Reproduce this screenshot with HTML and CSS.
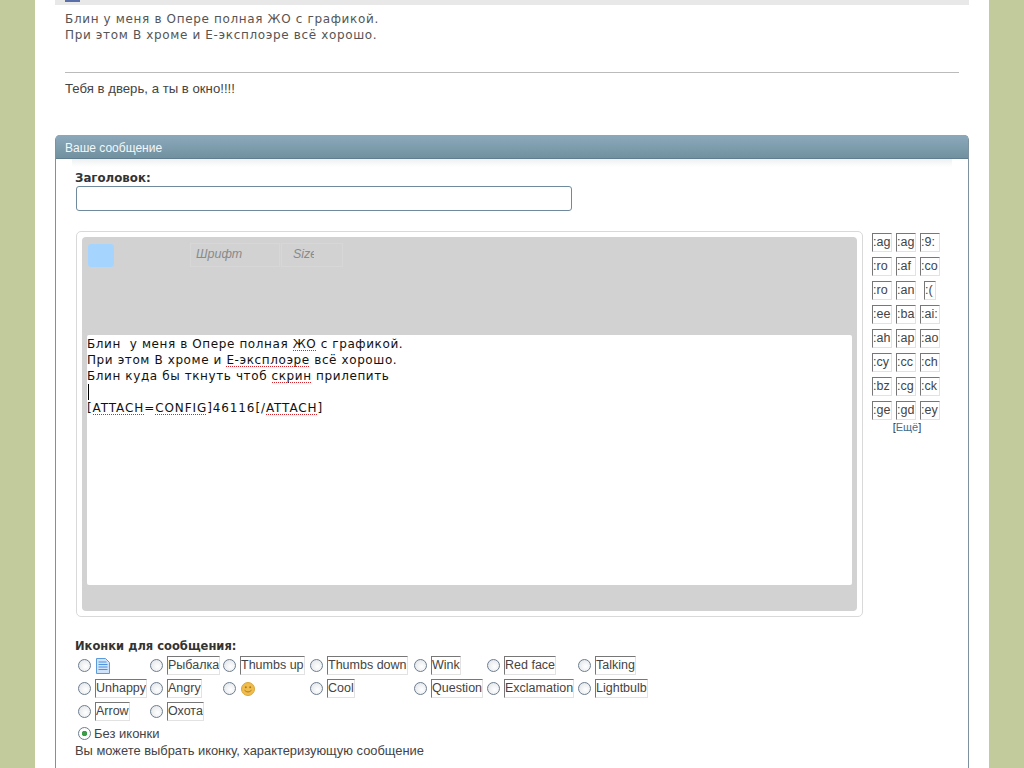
FILE: index.html
```html
<!DOCTYPE html>
<html lang="ru">
<head>
<meta charset="utf-8">
<title>Ваше сообщение</title>
<link rel="stylesheet" href="styles.css">
</head>
<body>
<div class="page">
  <div class="post-head"><span class="post-mark"></span></div>
  <div class="post-body">
    <div class="post-text">Блин у меня в Опере полная ЖО с графикой.<br>При этом В хроме и Е-эксплоэре всё хорошо.</div>
    <div class="signature">Тебя в дверь, а ты в окно!!!!</div>
  </div>
  <section class="panel">
    <h2 class="panel-title">Ваше сообщение</h2>
    <div class="panel-body">
      <div class="panel-shadow"></div>
      <label class="field-label title-label">Заголовок:</label>
      <input class="title-input" type="text">
      <div class="editor-row">
        <div class="editor-frame">
          <div class="editor">
            <div class="toolbar">
              <span class="tb-square"></span>
              <span class="tb-box tb-font">Шрифт</span>
              <span class="tb-box tb-size"><span class="tb-clip">Size</span></span>
            </div>
            <div class="edit-area">Блин&nbsp; у меня в Опере полная <u>ЖО</u> с графикой.<br>При этом В хроме и <u>Е-эксплоэре</u> всё хорошо.<br>Блин куда бы ткнуть чтоб <u>скрин</u> прилепить<br><span class="caret"></span><br><span class="attach">[<u>ATTACH</u>=<u>CONFIG</u>]46116[/<u>ATTACH</u>]</span></div>
          </div>
        </div>
        <div class="smilies">
          <div class="smiley-grid">
            <span class="alt">:ag</span><span class="alt">:ag</span><span class="alt">:9:</span>
            <span class="alt">:ro</span><span class="alt">:af</span><span class="alt">:co</span>
            <span class="alt">:ro</span><span class="alt">:an</span><span class="alt alt-narrow">:(</span>
            <span class="alt">:ee</span><span class="alt">:ba</span><span class="alt">:ai:</span>
            <span class="alt">:ah</span><span class="alt">:ap</span><span class="alt">:ao</span>
            <span class="alt">:cy</span><span class="alt">:cc</span><span class="alt">:ch</span>
            <span class="alt">:bz</span><span class="alt">:cg</span><span class="alt">:ck</span>
            <span class="alt">:ge</span><span class="alt">:gd</span><span class="alt">:ey</span>
          </div>
          <div class="more">[<a class="more-link">Ещё</a>]</div>
        </div>
      </div>
      <label class="field-label icons-label">Иконки для сообщения:</label>
      <div class="icon-grid">
        <label class="ic"><input type="radio" name="i"><svg class="pic" viewBox="0 0 14 16" width="14" height="16"><path d="M.5.5h9l4 4v11H.5z" fill="#cfe3fa" stroke="#5b9bdc"/><path d="M2.500 4h8M2.500 6.500h9M2.500 9h9M2.500 11.500h9" stroke="#4f93dd"/></svg></label>
        <label class="ic"><input type="radio" name="i"><span class="alt">Рыбалка</span></label>
        <label class="ic"><input type="radio" name="i"><span class="alt">Thumbs up</span></label>
        <label class="ic"><input type="radio" name="i"><span class="alt">Thumbs down</span></label>
        <label class="ic"><input type="radio" name="i"><span class="alt">Wink</span></label>
        <label class="ic"><input type="radio" name="i"><span class="alt">Red face</span></label>
        <label class="ic"><input type="radio" name="i"><span class="alt">Talking</span></label>
        <label class="ic"><input type="radio" name="i"><span class="alt">Unhappy</span></label>
        <label class="ic"><input type="radio" name="i"><span class="alt">Angry</span></label>
        <label class="ic"><input type="radio" name="i"><svg class="pic" viewBox="0 0 14 14" width="14" height="14"><circle cx="7" cy="7" r="6.500" fill="#f0bd4c" stroke="#d9a53a"/><circle cx="4.800" cy="5.300" r="1" fill="#a8792a"/><circle cx="9.200" cy="5.300" r="1" fill="#a8792a"/><path d="M3.500 8.200q3.500 3.600 7 0" fill="none" stroke="#a8792a"/></svg></label>
        <label class="ic"><input type="radio" name="i"><span class="alt">Cool</span></label>
        <label class="ic"><input type="radio" name="i"><span class="alt">Question</span></label>
        <label class="ic"><input type="radio" name="i"><span class="alt">Exclamation</span></label>
        <label class="ic"><input type="radio" name="i"><span class="alt">Lightbulb</span></label>
        <label class="ic"><input type="radio" name="i"><span class="alt">Arrow</span></label>
        <label class="ic"><input type="radio" name="i"><span class="alt">Охота</span></label>
      </div>
      <label class="ic no-icon"><input type="radio" name="i" checked><span>Без иконки</span></label>
      <div class="hint">Вы можете выбрать иконку, характеризующую сообщение</div>
    </div>
  </section>
</div>
</body>
</html>
```
FILE: styles.css
```css
html, body { margin: 0; height: 100%; overflow: hidden; }
body { background: #c2cb9b; font-family: "Liberation Sans", Arial, sans-serif; font-size: 12px; color: #333; }
.page { margin: 0 35px; padding: 0 20px; background: #fff; height: 768px; box-sizing: border-box; }
.post-head { height: 5px; background: #e8e8e8; padding-left: 10px; overflow: hidden; }
.post-mark { display: block; width: 15px; height: 2px; background: #5a6ea8; }
.post-body { padding: 6px 10px 0; height: 130px; box-sizing: border-box; }
.post-text { font-family: "DejaVu Sans", Verdana, sans-serif; font-size: 12px; letter-spacing: 0.65px; line-height: 16px; color: #555; height: 61px; border-bottom: 1px solid #bbb; }
.signature { margin-top: 8px; font-size: 13.200px; line-height: 15px; color: #444; }
.panel { border: 1px solid #7d919f; border-bottom: 0; border-radius: 5px 5px 0 0; height: 633px; box-sizing: border-box; }
.panel-title { margin: -1px 0 0; height: 23px; padding-left: 9px; font-size: 12px; font-weight: normal; line-height: 26px; color: #f4f7f9; background: linear-gradient(#8ca9bc, #71919f); border-bottom: 1px solid #5f7d8f; border-radius: 4px 4px 0 0; }
.panel-body { padding: 0 19px; }
.panel-shadow { height: 8px; margin: 0 -3px; background: linear-gradient(#eef0f1, #fff); }
.field-label { display: block; font-family: "DejaVu Sans", Verdana, sans-serif; font-weight: bold; font-size: 11.500px; line-height: 14px; color: #333; margin-top: 3px; }
.title-label { font-size: 11.800px; padding-top: 1px; height: 13px; }
.title-input { display: block; width: 496px; height: 25px; box-sizing: border-box; margin: 2px 0 0 1px; padding: 0; border: 1px solid #6f8a9c; border-radius: 3px; background: #fff; }
.editor-row { display: flex; margin-top: 20px; align-items: flex-start; }
.editor-frame { width: 787px; height: 386px; margin-left: 1px; padding: 5px; box-sizing: border-box; border: 1px solid #d9d9d9; border-radius: 5px; flex: none; }
.editor { height: 374px; background: #d2d2d2; border-radius: 4px; padding: 0 5px 26px; box-sizing: border-box; display: flex; flex-direction: column; }
.toolbar { height: 98px; flex: none; display: flex; align-items: flex-start; padding-top: 7px; box-sizing: border-box; color: #8a8a8a; font-style: italic; font-size: 12.500px; }
.tb-square { width: 26px; height: 23px; margin-left: 1px; background: #a5d5ff; border-radius: 3px; flex: none; }
.tb-box { height: 24px; margin-top: -1px; line-height: 21px; border: 1px solid #d7d7d7; box-sizing: border-box; flex: none; }
.tb-font { width: 90px; margin-left: 76px; padding-left: 5px; }
.tb-size { width: 62px; margin-left: 1px; padding-left: 11px; }
.tb-clip { display: block; width: 21px; overflow: hidden; }
.edit-area { height: 250px; flex: none; background: #fff; font-family: "DejaVu Sans", Verdana, sans-serif; font-size: 12px; letter-spacing: 0.6px; line-height: 16px; color: #111; padding: 1px 0 0 0; box-sizing: border-box; border-radius: 2px; white-space: nowrap; }
.edit-area u { text-decoration: none; background: repeating-linear-gradient(90deg, #d8232a 0 1px, transparent 1px 2px) 0 13px / 100% 1px no-repeat; }
.attach { letter-spacing: 0.9px; }
.caret { display: inline-block; width: 1px; height: 16px; background: #000; vertical-align: top; margin-left: 1px; }
.smilies { margin-left: 9px; margin-top: 2px; width: 68px; }
.smiley-grid { display: grid; grid-template-columns: repeat(3, 20px); column-gap: 4px; row-gap: 5px; }
.alt { display: inline-block; min-height: 19px; line-height: 16px; box-sizing: border-box; padding: 0; border: 1px solid; border-color: #777 #e2e2e2 #e2e2e2 #777; font-size: 12.500px; color: #444; white-space: nowrap; overflow: hidden; }
.smiley-grid .alt { width: 20px; }
.smiley-grid .alt-narrow { width: 12px; justify-self: center; }
.more { text-align: center; font-size: 11px; line-height: 14px; margin: 0 0 0 2px; color: #333; }
.more-link { color: #3f6f8f; }
.icons-label { margin-top: 22px; height: 13px; }
.icon-grid { display: grid; grid-template-columns: 72px 73px 87px 104px 73px 91px auto; row-gap: 4px; margin-top: 4px; justify-content: start; padding-left: 2px; }
.ic { display: flex; align-items: center; gap: 4px; min-height: 19px; }
.pic { margin-left: 1px; }
.ic input { appearance: none; -webkit-appearance: none; width: 13px; height: 13px; margin: 0 0 0 1px; border: 1px solid #6d7d90; border-radius: 50%; box-sizing: border-box; background: radial-gradient(circle at 60% 60%, #fff, #dde1e5); flex: none; }
.ic input:checked { background: radial-gradient(circle, #3d9a46 0 2.500px, #fff 3px); }
.no-icon { margin: 3px 0 0 2px; gap: 3px; font-size: 13px; color: #444; line-height: 14px; }
.hint { margin-top: 0; font-size: 12.900px; line-height: 15px; color: #444; }
```
